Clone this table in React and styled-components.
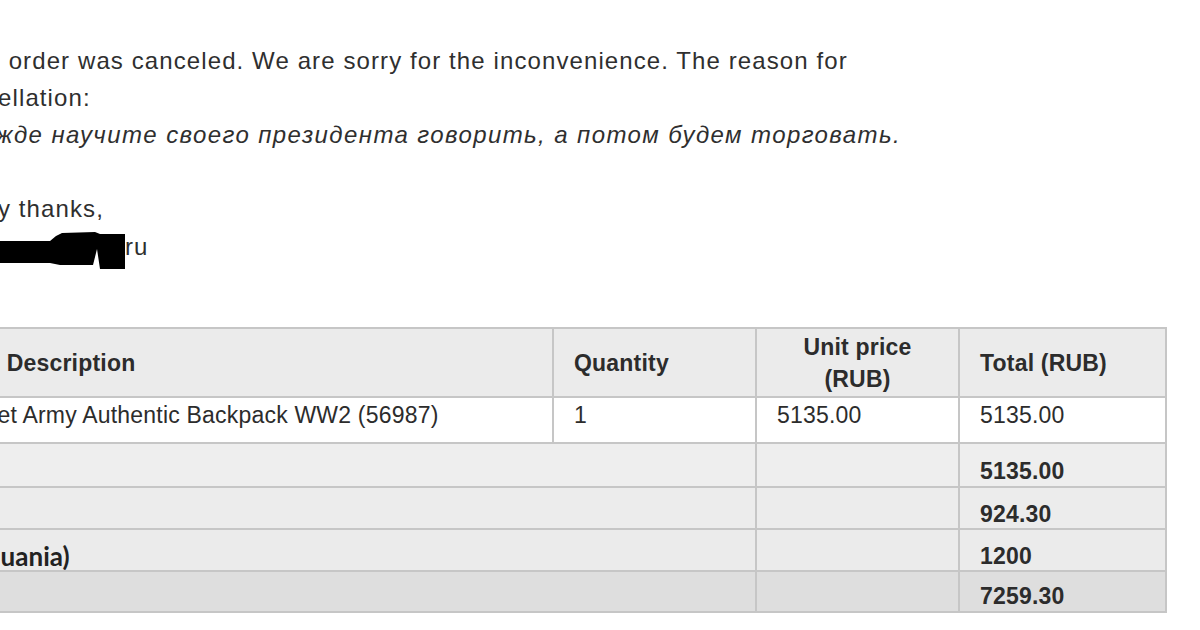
import React from "react";
import styled, { createGlobalStyle } from "styled-components";

const GlobalStyle = createGlobalStyle`
  html, body {
    margin: 0;
    padding: 0;
    background: #ffffff;
    overflow: hidden;
  }
  body {
    font-family: "Liberation Sans", Arial, sans-serif;
  }
`;

const Page = styled.div`
  width: 1200px;
  height: 630px;
  overflow: hidden;
  padding-top: 42px;
  box-sizing: border-box;
`;

const Letter = styled.div`
  margin-left: -52px;
  font-size: 24px;
  letter-spacing: 1.1px;
  line-height: 37px;
  color: #2f2f2f;
`;

const Line = styled.div`
  white-space: nowrap;
  font-style: ${(p) => (p.italic ? "italic" : "normal")};
  letter-spacing: ${(p) => (p.italic ? "1.4px" : "inherit")};
  margin-left: ${(p) => p.indent || 0}px;
  height: ${(p) => (p.blank ? "37px" : "auto")};
`;

const Signature = styled.div`
  display: flex;
  align-items: flex-start;
  height: 40px;
  line-height: 40px;
`;

const Blot = styled.svg`
  display: block;
  flex: none;
`;

const Table = styled.table`
  margin-top: 60px;
  margin-left: -300px;
  width: 1465px;
  table-layout: fixed;
  border-collapse: collapse;
  font-family: "Liberation Sans", Arial, sans-serif;
  font-size: 23px;
  letter-spacing: 0.2px;
  color: #2c2c2c;
  border: 2px solid #bcbcbc;
`;

const Row = styled.tr`
  height: ${(p) => p.h}px;
  background: ${(p) => p.bg};
`;

const Cell = styled.td`
  border: 2px solid #c6c6c6;
  padding: ${(p) => p.pt || 0}px 20px 0 20px;
  vertical-align: ${(p) => (p.pt ? "top" : "middle")};
  white-space: nowrap;
  overflow: hidden;
  font-weight: ${(p) => (p.bold ? 700 : 400)};
  text-align: ${(p) => (p.center ? "center" : "left")};
  line-height: ${(p) => (p.pt ? 22 : 32)}px;
`;

const Label = styled.span`
  font-family: Lato, "Liberation Sans", sans-serif;
  font-size: 26px;
  font-weight: 700;
  letter-spacing: 0;
  color: #222;
`;

const summary = [
  { label: "Subtotal", value: "5135.00", h: 44, bg: "#eeeeee", pt: 16 },
  { label: "VAT (18%)", value: "924.30", h: 42, bg: "#ececec", pt: 15 },
  { label: "Shipping cost (EMS, Lithuania)", value: "1200", h: 42, bg: "#ebebeb", pt: 15 },
  { label: "Total", value: "7259.30", h: 41, bg: "#dedede", pt: 13 },
];

export default function App() {
  return (
    <Page>
      <GlobalStyle />
      <Letter>
        <Line>Your order was canceled. We are sorry for the inconvenience. The reason for</Line>
        <Line indent={-5}>cancellation:</Line>
        <Line italic>Прежде научите своего президента говорить, а потом будем торговать.</Line>
        <Line blank />
        <Line>Many thanks,</Line>
        <Signature>
          <Blot width="177" height="42" viewBox="0 0 177 42">
            <path
              d="M0 14 L102 14 L108 9 L114 6 L147 5 L152 7 L177 7 L177 42 L152 42 L149 22 L145 38 L112 38 L102 36 L0 36 Z"
              fill="#000"
            />
          </Blot>
          <span>ru</span>
        </Signature>
      </Letter>
      <Table>
        <colgroup>
          <col style={{ width: 230 }} />
          <col style={{ width: 622 }} />
          <col style={{ width: 203 }} />
          <col style={{ width: 203 }} />
          <col style={{ width: 207 }} />
        </colgroup>
        <tbody>
          <Row h={69} bg="#ebebeb">
            <Cell bold>No.</Cell>
            <Cell bold>Item Description</Cell>
            <Cell bold>Quantity</Cell>
            <Cell bold center>
              Unit price
              <br />
              (RUB)
            </Cell>
            <Cell bold>Total (RUB)</Cell>
          </Row>
          <Row h={46} bg="#ffffff">
            <Cell pt={6}>1</Cell>
            <Cell pt={6}>Soviet Army Authentic Backpack WW2 (56987)</Cell>
            <Cell pt={6}>1</Cell>
            <Cell pt={6}>5135.00</Cell>
            <Cell pt={6}>5135.00</Cell>
          </Row>
          {summary.map((s) => (
            <Row key={s.label} h={s.h} bg={s.bg}>
              <Cell colSpan={3} pt={s.pt}>
                <Label>{s.label}</Label>
              </Cell>
              <Cell />
              <Cell bold pt={s.pt}>
                {s.value}
              </Cell>
            </Row>
          ))}
        </tbody>
      </Table>
    </Page>
  );
}
